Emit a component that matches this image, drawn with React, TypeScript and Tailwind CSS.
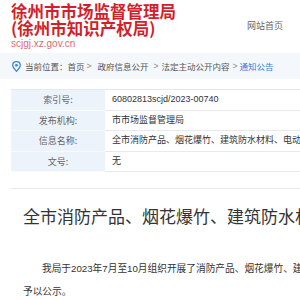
import React from 'react';

const rows = [
    { label: '索引号:', value: '60802813scjd/2023-00740' },
    { label: '发布机构:', value: '市市场监督管理局' },
    { label: '信息名称:', value: '全市消防产品、烟花爆竹、建筑防水材料、电动自行车产品质量监督抽查结果公示' },
    { label: '文号:', value: '无' },
];

const PinIcon: React.FC = () => (
    <svg width="9" height="11" viewBox="0 0 9 11" fill="none">
        <path
            d="M4.5 10.2C4.5 10.2 8.3 6.6 8.3 4.3C8.3 2.2 6.6 0.7 4.5 0.7C2.4 0.7 0.7 2.2 0.7 4.3C0.7 6.6 4.5 10.2 4.5 10.2Z"
            stroke="#3f86e0"
            strokeWidth="1.3"
        />
        <circle cx="4.5" cy="4.3" r="1.4" fill="#3f86e0" />
    </svg>
);

export default function App() {
    return (
        <div className="w-[300px] h-[300px] overflow-hidden bg-white font-['Noto_Sans_CJK_SC',sans-serif]">
            <header className="w-[300px] h-[53px] flex justify-between pl-[11px] pr-[17px]">
                <div className="pt-[3px]">
                    <h1 className="text-[16.5px] leading-[17px] font-bold text-[#d21f2b] whitespace-nowrap">
                        徐州市市场监督管理局
                        <br />
                        (徐州市知识产权局)
                    </h1>
                    <p className="mt-[1px] text-[10px] leading-[12px] text-[#d96a72] font-['Liberation_Sans',sans-serif]">
                        scjgj.xz.gov.cn
                    </p>
                </div>
                <a className="pt-[20px] text-[9px] leading-[12px] text-[#666]">网站首页</a>
            </header>

            <div className="w-[700px] h-[26px] bg-[#f4f8fc] flex items-center pl-[12px] text-[8.5px] text-[#555] whitespace-nowrap">
                <PinIcon />
                <span className="ml-[4px]">当前位置：</span>
                <span>首页</span>
                <span className="ml-[2px] text-[#888] font-['Liberation_Sans',sans-serif]">&gt;</span>
                <span className="ml-[6px]">政府信息公开</span>
                <span className="ml-[5px] text-[#888] font-['Liberation_Sans',sans-serif]">&gt;</span>
                <span className="ml-[3px]">法定主动公开内容</span>
                <span className="ml-[3px] text-[#888] font-['Liberation_Sans',sans-serif]">&gt;</span>
                <span className="ml-[2px] text-[#3b7bd8]">通知公告</span>
            </div>

            <div className="w-[700px] pl-[11px]">
                <div className="mt-[10px] border-t border-[#e4e9ef]">
                    {rows.map((row) => (
                        <div key={row.label} className="flex h-[20.5px] text-[9px]">
                            <div className="w-[94px] shrink-0 bg-[#ecf3fb] border-b border-[#f8fbfe] flex items-center justify-center text-[#666]">
                                {row.label}
                            </div>
                            <div className="flex-1 border-b border-[#e6e9ee] flex items-center pl-[7px] text-[#333] whitespace-nowrap font-['Liberation_Sans','Noto_Sans_CJK_SC',sans-serif]">
                                {row.value}
                            </div>
                        </div>
                    ))}
                </div>

                <div className="mt-[16px] border-t border-[#e6e8eb]" />

                <h2 className="mt-[15px] pl-[12px] text-[17px] leading-[24px] text-[#333] whitespace-nowrap">
                    全市消防产品、烟花爆竹、建筑防水材料、电动自行车产品质量监督抽查结果公示
                </h2>

                <div className="mt-[29px] pl-[12px] text-[9.7px] leading-[23px] text-[#333] whitespace-nowrap font-['Liberation_Sans','Noto_Sans_CJK_SC',sans-serif]">
                    <p className="indent-[19px]">
                        我局于2023年7月至10月组织开展了消防产品、烟花爆竹、建筑防水材料、电动自行车产品质量监督抽查工作，现将抽查结果
                    </p>
                    <p>予以公示。</p>
                </div>
            </div>
        </div>
    );
}
